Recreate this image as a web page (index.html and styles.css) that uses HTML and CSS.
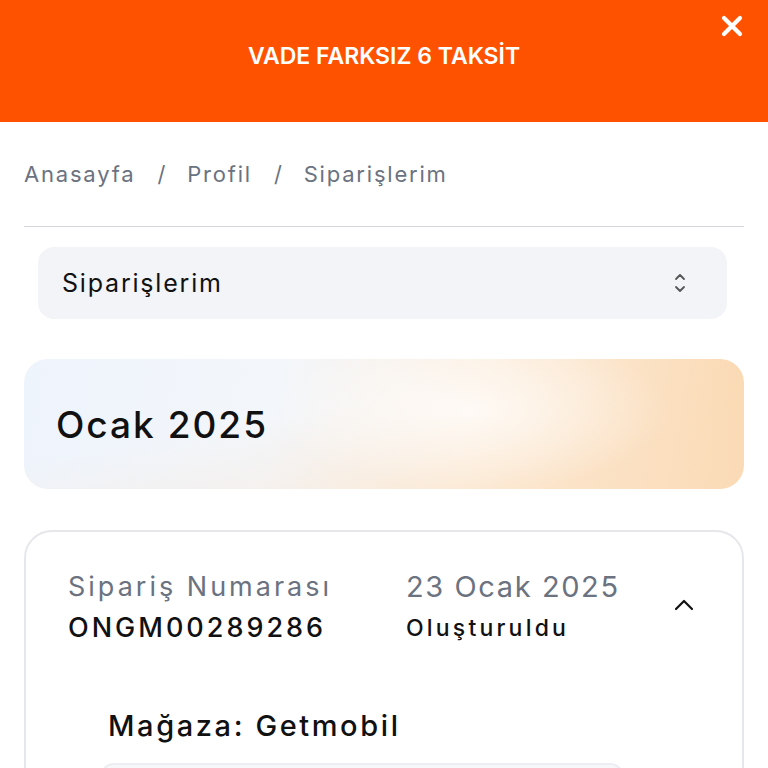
FILE: index.html
```html
<!DOCTYPE html>
<html lang="tr">

<head>
    <meta charset="UTF-8">
    <meta name="viewport" content="width=device-width, initial-scale=1.0">
    <title>Siparişlerim</title>
    <link rel="stylesheet" href="styles.css">
</head>

<body>
    <div class="promo">
        <span class="promo-text">VADE FARKSIZ 6 TAKSİT</span>
        <button class="promo-close" aria-label="Kapat">
            <svg width="24" height="24" viewBox="0 0 24 24">
                <path d="M4 4L20 20M20 4L4 20" stroke="#fff" stroke-width="4.2" stroke-linecap="round" />
            </svg>
        </button>
    </div>

    <main class="page">
        <nav class="crumbs">
            <a href="#">Anasayfa</a>
            <span class="sep">/</span>
            <a href="#">Profil</a>
            <span class="sep">/</span>
            <a href="#">Siparişlerim</a>
        </nav>

        <div class="select">
            <span>Siparişlerim</span>
            <svg width="14" height="26" viewBox="0 0 14 26">
                <path d="M3 9L7 5L11 9" fill="none" stroke="#555" stroke-width="1.8" stroke-linecap="round" stroke-linejoin="round" />
                <path d="M3 17L7 21L11 17" fill="none" stroke="#555" stroke-width="1.8" stroke-linecap="round" stroke-linejoin="round" />
            </svg>
        </div>

        <div class="month">Ocak 2025</div>

        <div class="order">
            <div class="order-head">
                <div class="order-col">
                    <div class="label">Sipariş Numarası</div>
                    <div class="value">ONGM00289286</div>
                </div>
                <div class="order-col date-col">
                    <div class="label date">23 Ocak 2025</div>
                    <div class="status">Oluşturuldu</div>
                </div>
                <svg class="toggle" width="20" height="12" viewBox="0 0 20 12">
                    <path d="M2 10L10 2L18 10" fill="none" stroke="#111" stroke-width="2.2" stroke-linecap="round" stroke-linejoin="round" />
                </svg>
            </div>

            <div class="order-body">
                <div class="store">Mağaza: Getmobil</div>
                <div class="item"></div>
            </div>
        </div>
    </main>
</body>

</html>
```

FILE: styles.css
```css
body {
    font-family: Inter, "Noto Sans", sans-serif;
    margin: 0;
    color: #111;
    background: #fff;
    overflow: hidden;
}

.promo {
    position: relative;
    height: 122px;
    background: #ff5200;
    display: flex;
    align-items: center;
    justify-content: center;
    padding-bottom: 10px;
    box-sizing: border-box;
}

.promo-text {
    color: #fff;
    font-size: 23px;
    font-weight: 600;
    letter-spacing: 0;
}

.promo-close {
    position: absolute;
    top: 14px;
    right: 24px;
    padding: 0;
    border: 0;
    background: none;
    line-height: 0;
}

.page {
    padding: 0 24px;
}

.crumbs {
    display: flex;
    align-items: center;
    height: 104px;
    border-bottom: 1.5px solid #d4d6dc;
    font-size: 22px;
    letter-spacing: 1.8px;
    color: #6b7280;
}

.crumbs a {
    color: #6b7280;
    text-decoration: none;
}

.crumbs .sep {
    margin: 0 20px 0 22px;
}

.select {
    display: flex;
    align-items: center;
    justify-content: space-between;
    height: 72px;
    margin: 20px 17px 0 14px;
    padding: 0 40px 0 24px;
    background: #f2f4f8;
    border-radius: 16px;
    font-size: 25px;
    letter-spacing: 1.8px;
    color: #111;
}

.month {
    display: flex;
    align-items: center;
    height: 130px;
    margin-top: 40px;
    padding-left: 32px;
    border-radius: 24px;
    font-size: 37px;
    font-weight: 500;
    letter-spacing: 2px;
    background:
        radial-gradient(ellipse 200px 80px at 62% 40%, rgba(255, 255, 255, 0.7), rgba(255, 255, 255, 0)),
        linear-gradient(170deg, rgba(255, 255, 255, 0) 40%, rgba(251, 222, 190, 0.45) 100%),
        linear-gradient(100deg, #eef4fc 0%, #f3f6fa 35%, #fcefe0 62%, #fad8b0 100%);
}

.order {
    margin-top: 41px;
    border: 2px solid #e5e7eb;
    border-radius: 28px;
    padding: 36px 42px 0;
    height: 300px;
}

.order-head {
    display: flex;
    align-items: center;
}

.order-col {
    width: 338px;
}

.date-col {
    width: 240px;
}

.label {
    font-size: 27px;
    letter-spacing: 3px;
    color: #6b7280;
    line-height: 38px;
}

.date {
    font-size: 29px;
    letter-spacing: 1.6px;
    white-space: nowrap;
}

.value {
    font-size: 27px;
    font-weight: 500;
    letter-spacing: 3px;
    line-height: 44px;
}

.status {
    font-size: 23px;
    font-weight: 500;
    letter-spacing: 3.2px;
    line-height: 44px;
}

.toggle {
    margin-left: 28px;
    margin-bottom: 8px;
}

.order-body {
    padding: 56px 0 0 40px;
}

.store {
    font-size: 29px;
    font-weight: 500;
    letter-spacing: 2.6px;
    line-height: 40px;
}

.item {
    margin: 17px 0 0 -8px;
    width: 520px;
    height: 120px;
    border: 2px solid #eceef2;
    background: #f6f7f9;
    border-radius: 14px;
}
```
